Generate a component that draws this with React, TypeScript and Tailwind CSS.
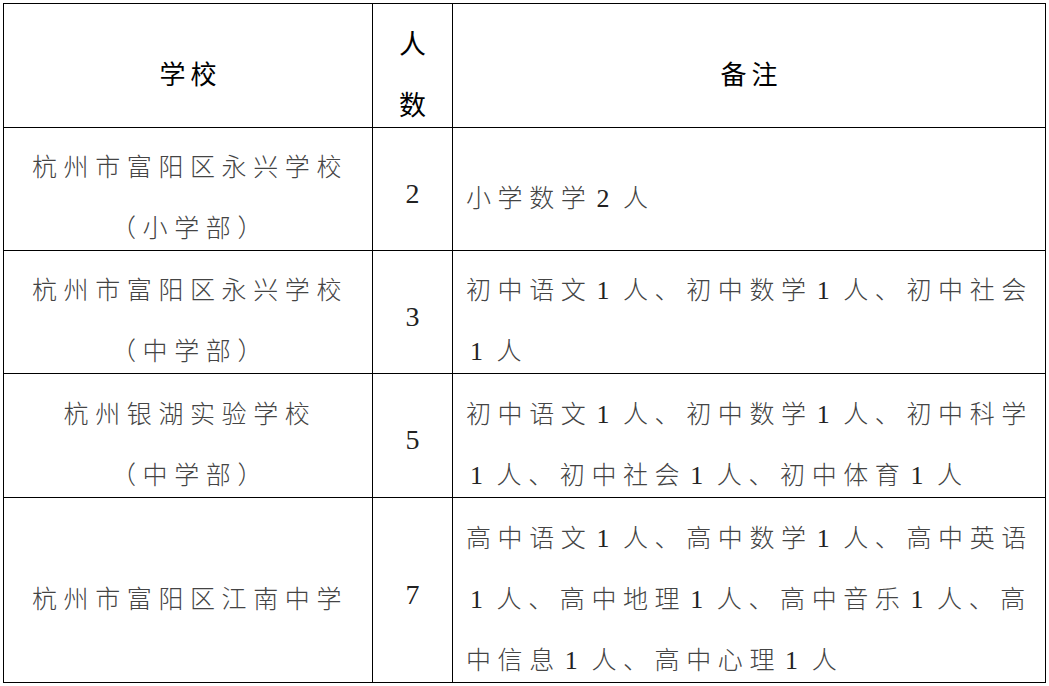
import React from "react";

/** One row of the placement table: school lines, head count, remark lines. */
type Row = {
  school: string[];
  count: string;
  remarks: string[];
};

const ROWS: Row[] = [
  {
    school: ["杭州市富阳区永兴学校", "（小学部）"],
    count: "2",
    remarks: ["小学数学2人"],
  },
  {
    school: ["杭州市富阳区永兴学校", "（中学部）"],
    count: "3",
    remarks: ["初中语文1人、初中数学1人、初中社会", "1人"],
  },
  {
    school: ["杭州银湖实验学校", "（中学部）"],
    count: "5",
    remarks: ["初中语文1人、初中数学1人、初中科学", "1人、初中社会1人、初中体育1人"],
  },
  {
    school: ["杭州市富阳区江南中学"],
    count: "7",
    remarks: [
      "高中语文1人、高中数学1人、高中英语",
      "1人、高中地理1人、高中音乐1人、高",
      "中信息1人、高中心理1人",
    ],
  },
];

const ROW_HEIGHTS = "grid-rows-[124px_123px_123px_124px_185px]";

/** Body text line on the document grid: every glyph, digits too, takes one slot. */
const GridLine: React.FC<{ text: string; className?: string }> = ({ text, className }) => (
  <div className={`whitespace-nowrap leading-[61px] tracking-[6.6px] ${className ?? ""}`}>
    {text.split(/(\d+)/).map((part, i) =>
      /^\d+$/.test(part) ? (
        <span
          key={i}
          className="font-['Liberation_Serif',serif] text-[26px] ml-[4px] mr-[7px] leading-none text-[#222]"
        >
          {part}
        </span>
      ) : (
        <React.Fragment key={i}>{part}</React.Fragment>
      ),
    )}
  </div>
);

const Cell: React.FC<{ className?: string; children: React.ReactNode }> = ({
  className,
  children,
}) => (
  <div className={`border-r border-b border-black flex items-center pt-[14px] ${className ?? ""}`}>
    {children}
  </div>
);

export default function App() {
  return (
    <div className="min-h-[686px] bg-white pl-[3px] pt-[3px] font-['Noto_Sans_CJK_SC',sans-serif]">
      <div
        className={`grid w-fit grid-cols-[369px_80px_593px] ${ROW_HEIGHTS} border-l border-t border-black`}
      >
        {/* header */}
        <Cell className="justify-center">
          <div className="leading-[61px] text-[26px] tracking-[5px] pl-[5px] text-black">学校</div>
        </Cell>
        <Cell className="justify-center">
          <div className="flex flex-col items-center text-[27px] leading-[61px] text-black">
            <span>人</span>
            <span>数</span>
          </div>
        </Cell>
        <Cell className="justify-center">
          <div className="leading-[61px] text-[26px] tracking-[5px] pl-[5px] text-black">备注</div>
        </Cell>

        {ROWS.map((row) => (
          <React.Fragment key={row.count}>
            <Cell className="justify-center">
              <div className="flex flex-col items-center text-[25px] font-light text-[#444] pl-[4px]">
                {row.school.map((line) => (
                  <GridLine key={line} text={line} />
                ))}
              </div>
            </Cell>
            <Cell className="justify-center">
              <div className="leading-[61px]">
                <span className="font-['Liberation_Serif',serif] text-[28px] leading-none text-[#222]">
                  {row.count}
                </span>
              </div>
            </Cell>
            <Cell className="justify-start pl-[13px]">
              <div className="flex flex-col text-[25px] font-light text-[#444]">
                {row.remarks.map((line) => (
                  <GridLine key={line} text={line} />
                ))}
              </div>
            </Cell>
          </React.Fragment>
        ))}
      </div>
    </div>
  );
}
